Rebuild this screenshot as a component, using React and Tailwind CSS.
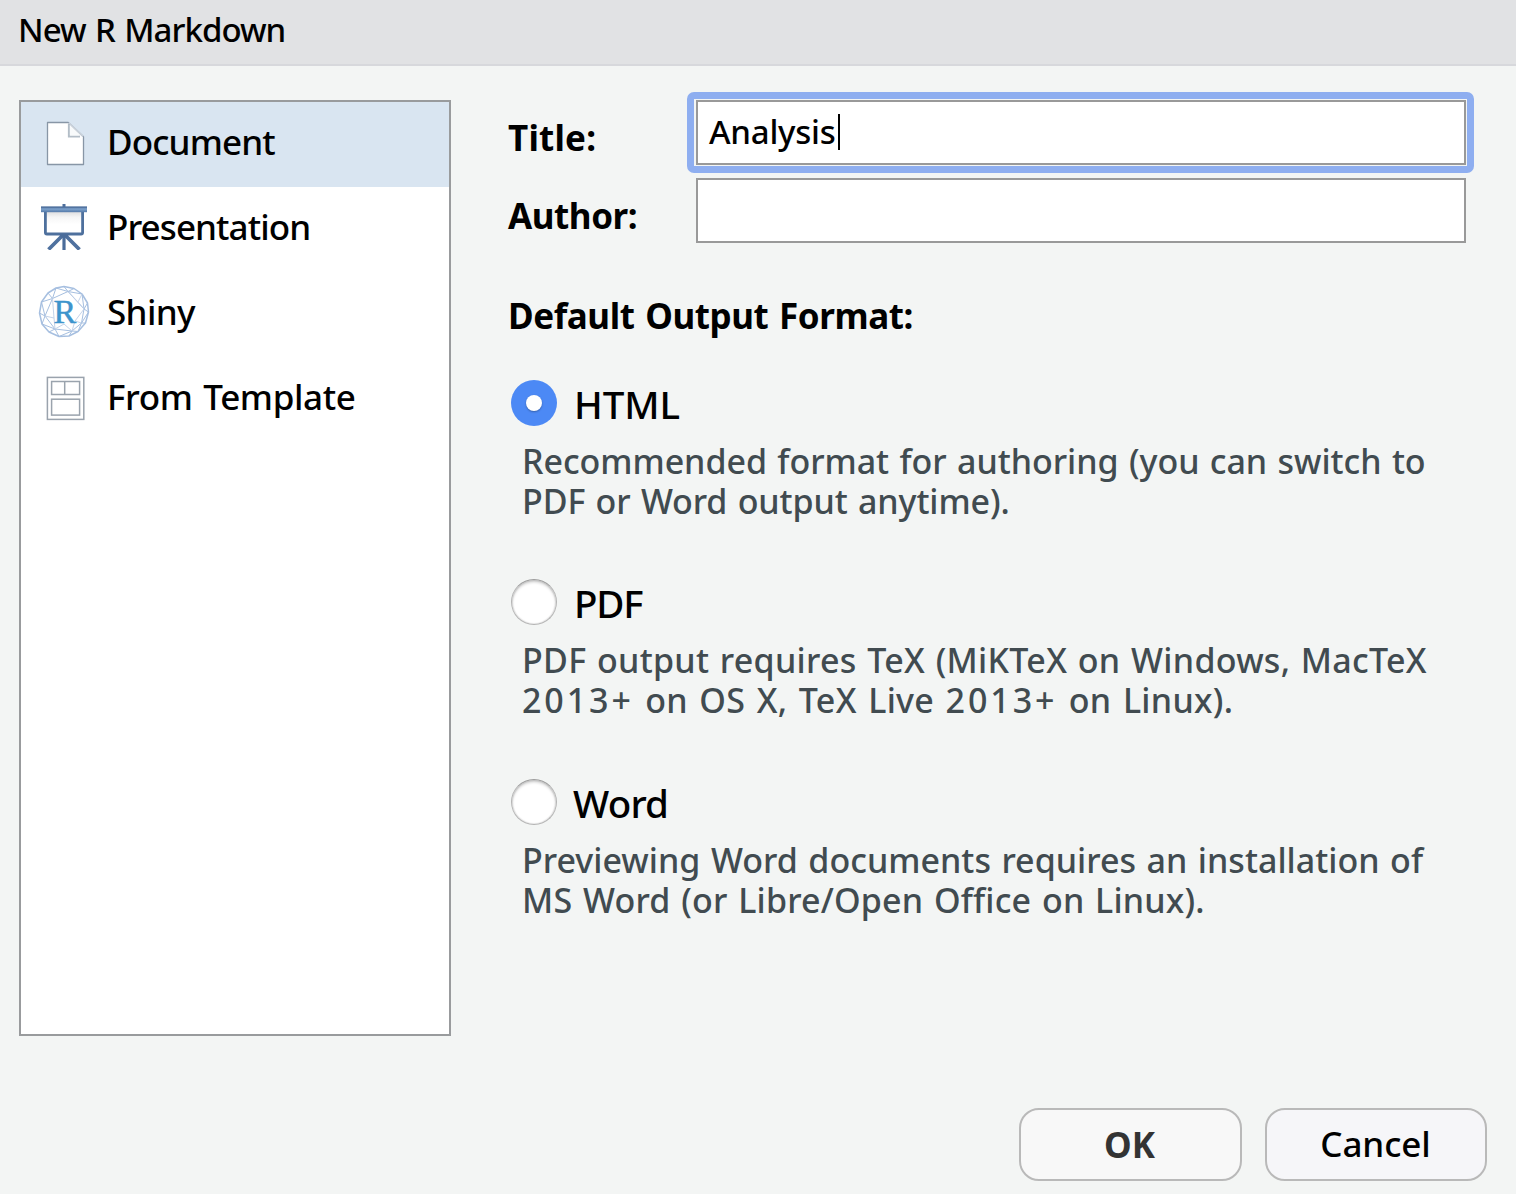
function DocumentIcon() {
  return (
    <svg className="-mt-[5px]" width="54" height="60" viewBox="0 0 54 60" fill="none">
      <path d="M10.5 10.5H31.2L46.5 24.8V52.5H10.5Z" fill="#fff" stroke="#8896a6" strokeWidth="1.3" strokeLinejoin="round" />
      <path d="M31.7 10.8L46.2 24.4" stroke="#c9d1da" strokeWidth="1.8" />
      <path d="M31.9 12V24.6H43" stroke="#b3bdc7" strokeWidth="2" />
      <path d="M32.9 13L43 23.6H32.9Z" fill="#f8fafb" />
    </svg>
  );
}

function PresentationIcon() {
  return (
    <svg className="-mt-[3px]" width="54" height="60" viewBox="0 0 54 60" fill="none">
      <defs>
        <linearGradient id="boardShade" x1="0" y1="0" x2="0" y2="1">
          <stop offset="0" stopColor="#d6d6d8" />
          <stop offset="0.3" stopColor="#f6f6f6" />
          <stop offset="0.6" stopColor="#fff" />
        </linearGradient>
        <linearGradient id="railShade" x1="0" y1="0" x2="0" y2="1">
          <stop offset="0" stopColor="#51729f" />
          <stop offset="0.45" stopColor="#7ba0ca" />
          <stop offset="1" stopColor="#5479a8" />
        </linearGradient>
      </defs>
      <path d="M26 37L11.5 51.5M28 37L42.5 51.5" stroke="#4f719f" strokeWidth="3.8" />
      <path d="M27 36V52" stroke="#4a6c9a" strokeWidth="3.2" />
      <path d="M4 52H50V56H4Z" fill="#fff" />
      <rect x="8.4" y="12" width="37.2" height="24" rx="1.5" fill="url(#boardShade)" stroke="#4e709d" strokeWidth="2.8" />
      <path d="M22 36L24 39.5H30L32 36Z" fill="#4a6c9a" />
      <rect x="25.5" y="6" width="3" height="4" fill="#4e6f9c" />
      <rect x="4" y="8.6" width="46" height="5.6" fill="url(#railShade)" />
      <rect x="4" y="8.6" width="46" height="1.2" fill="#4f719e" />
    </svg>
  );
}

function ShinyIcon() {
  return (
    <svg className="-mt-[7px]" width="54" height="60" viewBox="0 0 54 60" fill="none">
      <g stroke="#a6bfe0" strokeWidth="1" strokeLinejoin="round">
        <path
          d="M27 5.5L37 7.5L45 13L50.5 22L51.5 31L48.5 42L41 50.5L32 55L22 55.5L12 51L5 43L2.5 32L4.5 21L11 12L19 7Z"
          strokeWidth="1.5"
        />
        <path d="M19 7L31 10.5L45 13L47 28L51.5 31M31 10.5L37 7.5M27 5.5L31 10.5L15.5 17.5L11 12M15.5 17.5L19 7M15.5 17.5L4.5 21L8 35L2.5 32M15.5 17.5L8 35L5 43L18 48L12 51M8 35L18 48L22 55.5L35 50L32 55M18 48L35 50L41 50.5L44.5 42L48.5 42M35 50L44.5 42L47 28L50.5 22M44.5 42L51.5 31M31 10.5L47 28" />
        <path
          d="M31 10.5L41 21L47 28L38 40L35 50M41 21L45 13M8 35L17 37L18 48M17 37L15.5 17.5M38 40L44.5 42M18 48L27 43L35 50"
          stroke="#c4d3e9"
        />
      </g>
      <text x="27.8" y="42" textAnchor="middle" fontFamily="Liberation Serif, serif" fontSize="34" fontWeight="400" fill="#3d94cc" stroke="#3d94cc" strokeWidth="0.5">
        R
      </text>
    </svg>
  );
}

function TemplateIcon() {
  return (
    <svg className="-mt-[5px]" width="54" height="60" viewBox="0 0 54 60" fill="none" stroke="#9aa3ad" strokeWidth="1.5">
      <rect x="10.4" y="10.4" width="36.4" height="42" fill="#fff" />
      <rect x="14.6" y="14.5" width="28" height="13" />
      <path d="M27.7 14.5V27.5" />
      <rect x="14.6" y="32.2" width="28" height="15.9" />
    </svg>
  );
}

const kinds = [
  { label: "Document", Icon: DocumentIcon, spacing: "tracking-[-0.85px]", selected: true },
  { label: "Presentation", Icon: PresentationIcon, spacing: "tracking-[-0.92px]" },
  { label: "Shiny", Icon: ShinyIcon, spacing: "tracking-[-0.65px]" },
  { label: "From Template", Icon: TemplateIcon, spacing: "tracking-[-0.38px] [word-spacing:2px]" },
];

const formats = [
  {
    name: "HTML",
    nameStyle: "tracking-[-0.1px]",
    checked: true,
    margin: "mt-[44px]",
    lines: [
      ["Recommended format for authoring (you can switch to", "tracking-[-0.04px] [word-spacing:1.6px]"],
      ["PDF or Word output anytime).", "tracking-[-0.1px] [word-spacing:1.6px]"],
    ],
  },
  {
    name: "PDF",
    nameStyle: "tracking-[-1.2px]",
    margin: "mt-[58px]",
    lines: [
      ["PDF output requires TeX (MiKTeX on Windows, MacTeX", "tracking-[0.28px] [word-spacing:1.5px]"],
      ["2013+ on OS X, TeX Live 2013+ on Linux).", "tracking-[0.3px] [word-spacing:2.3px]"],
    ],
  },
  {
    name: "Word",
    nameStyle: "-ml-px tracking-[-0.8px]",
    margin: "mt-[59px]",
    lines: [
      ["Previewing Word documents requires an installation of", "tracking-[0.02px] [word-spacing:1.6px]"],
      ["MS Word (or Libre/Open Office on Linux).", "tracking-[0.17px] [word-spacing:1.7px]"],
    ],
  },
];

/* Year numbers are set wider than the words around them. */
function Line({ text }) {
  return text
    .split(/(2013\+)/)
    .filter(Boolean)
    .map((part, i) =>
      part === "2013+" ? (
        <span key={i} className="tracking-[2.9px]">
          {part}
        </span>
      ) : (
        part
      ),
    );
}

function Radio({ checked }) {
  if (checked) {
    return (
      <span className="flex size-[46px] shrink-0 items-center justify-center rounded-full bg-[#4c89f5]">
        <span className="size-4 rounded-full bg-white shadow-[0_1px_2px_rgba(0,0,0,0.3)]" />
      </span>
    );
  }
  return (
    <span className="size-[46px] shrink-0 rounded-full border border-[#b4b4b4] border-t-[#9c9c9c] bg-white shadow-[inset_0_2px_3px_rgba(0,0,0,0.2),inset_0_0_1px_1px_rgba(0,0,0,0.08)]" />
  );
}

export default function App() {
  return (
    <div className="flex h-[1194px] w-[1516px] flex-col overflow-hidden bg-[#f3f5f4] font-['Noto_Sans',sans-serif] font-medium text-black">
      <header className="h-[66px] shrink-0 border-b-2 border-[#d7d8dc] bg-[#e1e2e4] pl-[18px] text-[33px] leading-[60px] tracking-[-0.98px] [word-spacing:1.8px]">
        New R Markdown
      </header>

      <main className="flex pt-[34px] pl-[19px]">
        <ul className="h-[936px] w-[432px] shrink-0 border-2 border-[#999b9d] bg-white">
          {kinds.map(({ label, Icon, spacing, selected }) => (
            <li key={label} className={`flex h-[85px] items-center pl-4 ${selected ? "bg-[#d9e5f1]" : ""}`}>
              <Icon />
              <span className={`pb-1.5 pl-4 text-[35px] leading-[79px] ${spacing}`}>{label}</span>
            </li>
          ))}
        </ul>

        <section className="ml-[57px] w-[958px]">
          <div className="grid grid-cols-[188px_770px] grid-rows-[65px_65px] gap-y-[13px]">
            <label className="pt-[11px] text-[35px] leading-[54px] font-bold tracking-[0.2px]">Title:</label>
            <div className="relative flex h-[65px] items-center border-2 border-[#999] bg-white pb-px pl-[11px] text-[33px] tracking-[-0.25px]">
              <span className="pointer-events-none absolute -top-[10px] -right-[10px] -bottom-[10px] -left-[11px] rounded-[7px] border-[7px] border-[#8eaef0]" />
              Analysis
              <span className="ml-0.5 h-9 w-0.5 bg-black" />
            </div>
            <label className="pt-[11px] text-[35px] leading-[54px] font-bold tracking-[-0.44px]">Author:</label>
            <div className="h-[65px] border-2 border-[#999] bg-white" />
          </div>

          <h2 className="mt-[53px] text-[35px] leading-10 font-bold tracking-[-0.42px] [word-spacing:2px]">
            Default Output Format:
          </h2>

          {formats.map(({ name, nameStyle, checked, margin, lines }) => (
            <div key={name} className={margin}>
              <div className="flex h-[46px] items-center pl-[3px]">
                <Radio checked={checked} />
                <span className={`pt-0.5 pl-[17px] text-[38.5px] leading-[46px] ${nameStyle}`}>{name}</span>
              </div>
              <div className="mt-[15px] pl-3.5 text-[34px] leading-10 text-[#414b50]">
                {lines.map(([text, spacing]) => (
                  <p key={text} className={`whitespace-nowrap ${spacing}`}>
                    <Line text={text} />
                  </p>
                ))}
              </div>
            </div>
          ))}
        </section>
      </main>

      <footer className="mt-[72px] flex gap-[23px] pl-[1019px] text-[35px]">
        <button className="h-[73px] w-[223px] rounded-[20px] border-2 border-[#b9b9b9] bg-[#f8f8f8] pt-0.5 pr-0.5 font-bold text-[#333]">
          OK
        </button>
        <button className="h-[73px] w-[222px] rounded-[20px] border-2 border-[#b9b9b9] bg-[#f6f6f9] pr-px tracking-[-0.1px]">
          Cancel
        </button>
      </footer>
    </div>
  );
}
